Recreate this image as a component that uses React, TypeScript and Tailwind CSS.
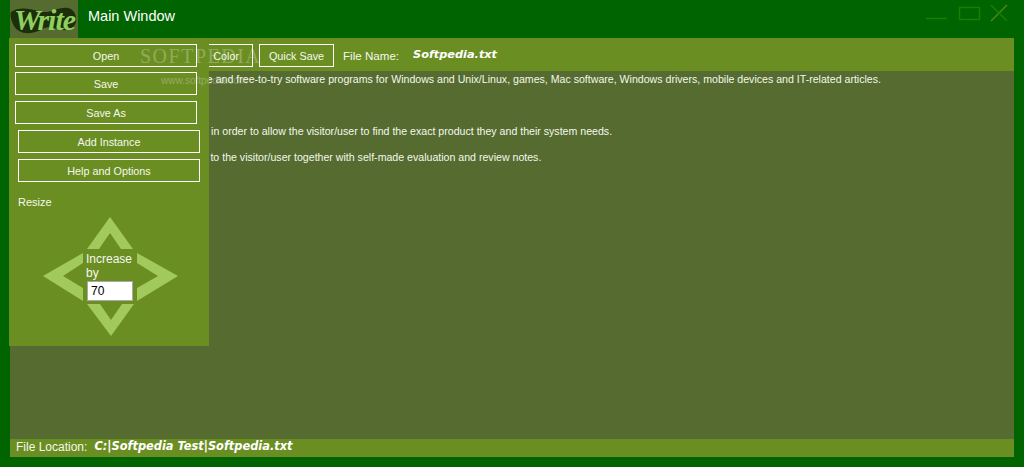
import React from "react";

const menuButton =
  "h-[23px] border border-white text-center text-[10.8px] leading-[22px] text-[#f4f8ec]";

const ResizeArrows = () => (
  <svg className="absolute left-0 top-0" width="200" height="308" viewBox="0 0 200 308" fill="#a2c95c">
    <polygon points="101,179 78,211 90,211 101,195 112,211 124,211" />
    <polygon points="34,238 74,215 74,225 54,238 74,250 74,263" />
    <polygon points="169,238 128,215 128,225 149,238 128,250 128,263" />
    <polygon points="102,298 78,266 91,266 102,282 113,266 125,266" />
  </svg>
);

const Logo = () => (
  <div className="relative h-[38px] w-[68px] overflow-hidden bg-[#556b2f]">
    <svg className="absolute left-0 top-0" width="68" height="38" viewBox="0 0 68 38" fill="#1c2f0a">
      <path d="M1 12 C8 7 18 8 28 11 C40 15 48 6 58 8 C68 10 69 26 60 29 C50 33 44 25 34 28 C24 35 8 36 3 24 C1 19 0 15 1 12 Z" />
    </svg>
    <span className="absolute left-[4px] top-[3px] font-['Liberation_Serif',serif] text-[30px] font-bold italic leading-[34px] tracking-[-1px] text-[#8fcf5f]">
      Write
    </span>
  </div>
);

export default function App() {
  return (
    <div className="relative flex h-[467px] w-[1024px] flex-col overflow-hidden bg-[#006400] px-[10px] pb-[10px] font-['Liberation_Sans',sans-serif] text-[10.6px] text-[#f4f8ec]">
      {/* title bar */}
      <div className="flex h-[38px] shrink-0 items-start">
        <Logo />
        <span className="ml-[10px] mt-[7px] text-[14.5px] leading-[18px] text-white">Main Window</span>
        <svg className="ml-auto mr-[6px] mt-[4px]" width="84" height="20" viewBox="0 0 84 20" fill="none" strokeWidth="1.5">
          <path d="M2 14.5 H23" stroke="#1d7d00" />
          <rect x="35.5" y="3.5" width="20" height="12" stroke="#1d7d00" />
          <path d="M67 17 L83 1" stroke="#4e8a10" />
          <path d="M67 1 L83 17" stroke="#1d7d00" />
        </svg>
      </div>

      {/* toolbar */}
      <div className="flex h-[33px] shrink-0 items-center bg-[#6b8e23] pl-[187px] pt-[2px]">
        <div className={`${menuButton} w-[56px] overflow-hidden whitespace-nowrap pr-[13px] text-right`}>Color</div>
        <div className={`${menuButton} ml-[6px] w-[75px]`}>Quick Save</div>
        <span className="ml-[9px] text-[11.6px]">File Name:</span>
        <span className="ml-[14px] font-['DejaVu_Sans',sans-serif] text-[11.3px] font-bold italic text-white">
          Softpedia.txt
        </span>
      </div>

      {/* document */}
      <div className="min-h-0 flex-1 overflow-hidden whitespace-pre bg-[#556b2f] pl-[2px] leading-[13px] text-[#f4f8ec]">
        <div className="ml-[7px] mt-[2px]">
          Softpedia is a library of over 750,000 free and free-to-try software programs for Windows and Unix/Linux, games, Mac software, Windows drivers, mobile devices and IT-related articles.
        </div>
        <div className="ml-[2px] mt-[39px]">
          We review and categorize these products in order to allow the visitor/user to find the exact product they and their system needs.
        </div>
        <div className="-ml-px mt-[13px]">
          We strive to deliver only the best products to the visitor/user together with self-made evaluation and review notes.
        </div>
      </div>

      {/* status bar */}
      <div className="flex h-[18px] shrink-0 items-center bg-[#6b8e23] pb-[2px] pl-[6px]">
        <span className="text-[12px]">File Location:</span>
        <span className="ml-[7px] font-['DejaVu_Sans',sans-serif] text-[11.4px] font-bold italic text-white">
          C:|Softpedia Test|Softpedia.txt
        </span>
      </div>

      {/* slide-out menu */}
      <div className="absolute left-[9px] top-[38px] flex h-[308px] w-[200px] flex-col bg-[#6b8e23]">
        <div className={`${menuButton} ml-[6px] mt-[6px] w-[182px]`}>Open</div>
        <div className={`${menuButton} ml-[6px] mt-[5px] w-[182px]`}>Save</div>
        <div className={`${menuButton} ml-[6px] mt-[6px] w-[182px]`}>Save As</div>
        <div className={`${menuButton} ml-[9px] mt-[6px] w-[182px]`}>Add Instance</div>
        <div className={`${menuButton} ml-[9px] mt-[6px] w-[182px]`}>Help and Options</div>
        <span className="ml-[9px] mt-[12px] text-[11px] leading-[16px]">Resize</span>
        <ResizeArrows />
        <div className="absolute left-[77px] top-[214px] w-[50px] text-[12px] leading-[14px]">
          <div>Increase</div>
          <div>by</div>
          <div className="ml-px mt-px h-[20px] w-[46px] border border-[#a9a9a9] bg-white pl-[3px] text-[12px] leading-[18px] text-black">
            70
          </div>
        </div>
      </div>

      {/* watermark */}
      <div className="pointer-events-none absolute left-[140px] top-[45px] font-['Liberation_Serif',serif] text-[20px] leading-[22px] tracking-[1.5px] text-white opacity-25">
        SOFTPEDIA
      </div>
      <div className="pointer-events-none absolute left-[161px] top-[74px] text-[10px] leading-[13px] text-white opacity-25">
        www.softpedia.com
      </div>
    </div>
  );
}
